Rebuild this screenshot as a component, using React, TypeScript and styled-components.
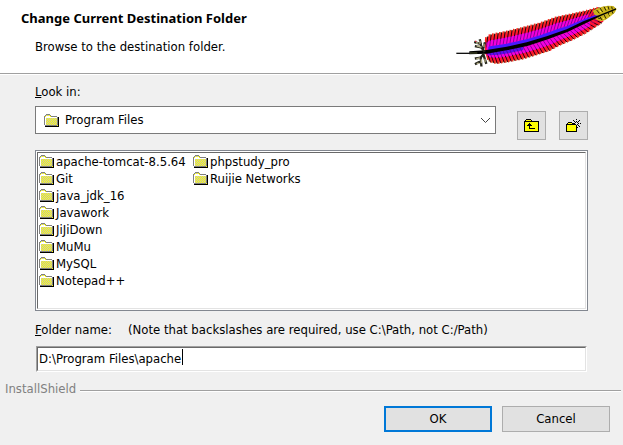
import React, { useState } from "react";
import styled, { createGlobalStyle } from "styled-components";

const GlobalStyle = createGlobalStyle`
  * { box-sizing: border-box; }
  body {
    margin: 0;
    background: #f0f0f0;
    color: #000;
    font: 13px/18px "DejaVu Sans Condensed", "Noto Sans", sans-serif;
  }
  button, input, select { font: inherit; color: inherit; border-radius: 0; }
`;

const Header = styled.header`
  display: flex;
  justify-content: space-between;
  align-items: flex-start;
  padding: 5px 5px 6px 21px;
  background: #fff;
  border-bottom: 1px solid #a0a0a0;
  box-shadow: 0 1px 0 #fff;
`;

const Heading = styled.div`
  display: flex;
  flex-direction: column;
  gap: 11px;
  padding-top: 4px;
`;

const Title = styled.h1`
  margin: 0;
  font: 700 13px/18px "Noto Sans", sans-serif;
`;

const Subtitle = styled.p`
  margin: 0 0 0 14px;
`;

const Form = styled.form`
  margin: 0;
`;

const Fields = styled.main`
  display: flex;
  flex-direction: column;
  padding: 9px 35px 8px;
`;

const LabelRow = styled.div`
  display: flex;
  gap: 16px;
`;

const LookRow = styled.div`
  display: flex;
  align-items: flex-end;
  margin: 5px 0 10px;
`;

const ComboBox = styled.div`
  position: relative;
  flex: 1;
  align-self: flex-start;
  margin: 0 21px 6px 0;
`;

const Combo = styled.select`
  display: block;
  appearance: none;
  width: 100%;
  height: 28px;
  padding: 0 24px 0 29px;
  background: #fff;
  border: 1px solid #7a7a7a;
  outline: none;
`;

const ComboMark = styled.span<{ $side: "left" | "right" }>`
  position: absolute;
  top: 0;
  bottom: 0;
  ${(p) => p.$side}: ${(p) => (p.$side === "left" ? 9 : 5)}px;
  display: flex;
  align-items: center;
  pointer-events: none;
`;

const ToolButton = styled.button`
  display: grid;
  place-items: center;
  width: 29px;
  height: 29px;
  padding: 0;
  background: #e1e1e1;
  border: 1px solid #adadad;

  & + & { margin-left: 13px; }
`;

const ListFrame = styled.div`
  padding: 1px;
  background: #fff;
  border: 1px solid #828790;
`;

const FolderList = styled.ul`
  display: grid;
  grid-auto-flow: column;
  grid-template-rows: repeat(8, 17px);
  grid-auto-columns: 154px;
  margin: 0;
  padding: 0 0 19px 1px;
  list-style: none;
  border: 1px solid;
  border-color: #696969 #e3e3e3 #e3e3e3 #696969;
`;

const FolderButton = styled.button`
  display: flex;
  align-items: center;
  gap: 2px;
  height: 17px;
  padding: 0;
  background: none;
  border: 0;
  line-height: 17px;
  white-space: nowrap;
`;

const NameRow = styled(LabelRow)`
  margin: 10px 0 7px;
`;

const NameBox = styled.div`
  position: relative;
  margin: 0 1px;
  background: #fff;
  border: 1px solid;
  border-color: #a0a0a0 #fff #fff #a0a0a0;
`;

const NameInput = styled.input`
  display: block;
  width: 100%;
  height: 24px;
  padding: 0 1px 2px;
  background: #fff;
  border: 1px solid;
  border-color: #696969 #e3e3e3 #e3e3e3 #696969;
  outline: none;
  caret-color: transparent;
`;

const CaretTrack = styled.span`
  position: absolute;
  top: 2px;
  left: 2px;
  height: 16px;
  padding-right: 1px;
  border-right: 1px solid #000;
  white-space: pre;
  color: transparent;
  pointer-events: none;
`;

const Brand = styled.div`
  display: flex;
  align-items: center;
  gap: 4px;
  padding: 0 2px 0 5px;
  color: #808080;
`;

const Rule = styled.hr`
  flex: 1;
  height: 2px;
  margin: 3px 0 0;
  border: 0;
  border-top: 1px solid #a0a0a0;
  border-bottom: 1px solid #fff;
`;

const Actions = styled.div`
  display: flex;
  justify-content: flex-end;
  gap: 10px;
  padding: 8px 13px 12px;
`;

const ActionButton = styled.button<{ $primary?: boolean }>`
  width: 108px;
  height: 26px;
  padding: 0;
  background: #e1e1e1;
  border: ${(p) => (p.$primary ? "2px solid #0078d7" : "1px solid #adadad")};
`;

const Drawing = styled.svg`
  display: block;
  flex: none;
`;

function FolderIcon() {
  const dots: string[] = [];
  for (let y = 4; y < 11; y++)
    for (let x = 2; x < 13; x++) if ((x + y) % 2 === 0) dots.push(`M${x} ${y}h1v1h-1z`);
  return (
    <Drawing width="15" height="13" viewBox="0 0 15 13" shapeRendering="crispEdges" aria-hidden>
      <path d="M2 1h5v2h7v9H1V2h1z" fill="#ffff00" />
      <path d={dots.join("") + "M2 1h1v1h-1zM4 1h1v1H4z"} fill="#c0c0c0" />
      <path d="M2 0h4v1H2zM1 1h1v1H1zM6 1h1v1H6zM0 2h1v9H0zM7 2h6v1H7zM13 3h1v8h-1zM1 11h12v1H1z" fill="#808080" />
      <path d="M1 3h12v1H1zM1 4h1v7H1zM2 2h4v1H2z" fill="#fff" />
      <path d="M14 3h1v10H1v-1h13z" fill="#000" />
    </Drawing>
  );
}

function UpFolderIcon() {
  return (
    <Drawing width="15" height="13" viewBox="0 0 15 13" shapeRendering="crispEdges" aria-hidden>
      <path d="M2 1h5v1h7v10H1V2h1z" fill="#ffff00" />
      <path d="M2 0h5v1H2zM1 1h1v1H1zM7 1h1v1H7zM0 2h1v11H0zM1 2h14v1H1zM14 3h1v10h-1zM1 12h13v1H1z" fill="#000" />
      <path d="M5 4h1v1H5zM4 5h3v1H4zM3 6h5v1H3zM5 7h1v2H5zM5 9h6v1H5z" fill="#000" />
    </Drawing>
  );
}

function NewFolderIcon() {
  return (
    <Drawing width="15" height="13" viewBox="0 0 15 13" shapeRendering="crispEdges" aria-hidden>
      <path d="M2 4h4v1h4v7H1V5h1z" fill="#ffff00" />
      <path d="M2 3h4v1H2zM1 4h1v1H1zM6 4h1v1H6zM0 5h1v8H0zM1 5h9v1H1zM10 6h1v7h-1zM1 12h9v1H1z" fill="#000" />
      <path
        d="M10 0h1v1h-1zM10 2h1v1h-1zM7 1h1v1H7zM8 2h1v1H8zM13 1h1v1h-1zM12 2h1v1h-1zM11 3h1v1h-1zM9 3h1v1H9zM7 4h2v1H7zM12 4h1v1h-1zM14 4h1v1h-1zM11 5h1v1h-1zM12 6h1v1h-1zM13 7h1v1h-1zM10 6h1v1h-1zM11 8h1v1h-1z"
        fill="#000"
      />
    </Drawing>
  );
}

function Chevron() {
  return (
    <Drawing width="11" height="7" viewBox="0 0 11 7" aria-hidden>
      <path d="M1 1l4.5 4.5L10 1" fill="none" stroke="#444" />
    </Drawing>
  );
}

type Point = [number, number];

const shaft: Point[] = [[135, 155], [200, 146], [260, 133], [320, 114], [380, 92], [430, 68], [480, 46], [530, 27]];
const upper: Point[] = [[135, 118], [150, 106], [200, 96], [250, 84], [300, 71], [350, 53], [400, 43], [440, 34], [470, 26], [490, 20], [515, 18], [530, 27]];
const lower: Point[] = [[135, 160], [148, 184], [170, 189], [200, 185], [250, 175], [290, 163], [330, 150], [360, 134], [400, 117], [440, 97], [470, 77], [490, 65], [510, 52], [530, 30]];

function yAt(line: Point[], x: number) {
  const end = line.findIndex((p) => p[0] >= x);
  if (end < 1) return end === 0 ? line[0][1] : line[line.length - 1][1];
  const [a, b] = [line[end - 1], line[end]];
  return a[1] + ((b[1] - a[1]) * (x - a[0])) / (b[0] - a[0]);
}

function band(edge: Point[], reach: number, from: number, to: number) {
  const out: string[] = [];
  const back: string[] = [];
  for (let x = from; x <= to; x += 5) {
    const s = yAt(shaft, x);
    out.push(`${x} ${s + (yAt(edge, x) - s) * reach}`);
    back.unshift(`${x} ${s}`);
  }
  return `M${out.concat(back).join("L")}Z`;
}

function barbs(edge: Point[], lean: number, shift: number, start: number, stop: number, over = 0) {
  const parts: string[] = [];
  for (let x = 132 + shift; x < 462; x += 10) {
    const tilt = lean + (x - 132) / 22;
    const ax = x + tilt * start;
    const bx = x + tilt * stop;
    const sy = yAt(shaft, ax);
    const ty = yAt(shaft, bx);
    const y1 = sy + (yAt(edge, ax) - sy) * start;
    const y2 = ty + (yAt(edge, bx) - ty) * stop + (edge === upper ? -over : over);
    parts.push(`M${ax} ${y1}L${bx} ${y2}`);
  }
  return parts.join("");
}

function Feather() {
  return (
    <Drawing width="162" height="62" viewBox="48 15 486 186" role="img" aria-label="Feather">
      <path d={band(upper, 1, 135, 480) + band(lower, 1, 135, 490)} fill="#ff1438" />
      <path d={band(upper, 0.68, 140, 445) + band(lower, 0.62, 140, 450)} fill="#f400dc" />
      <path d={band(upper, 0.3, 145, 475)} fill="#4a18ff" />
      <path d={band(lower, 0.38, 140, 250)} fill="#5a10f0" />
      <path d={barbs(upper, 6, 0, 0.8, 1, 4) + barbs(lower, 12, 0, 0.8, 1, 3)} stroke="#ff2020" strokeWidth="5" />
      <path d={barbs(upper, 6, 3, 0.9, 1, 3) + barbs(lower, 12, 3, 0.9, 1, 3)} stroke="#b08a20" strokeWidth="2" />
      <path d={barbs(upper, 6, 5, 0.65, 1, 2) + barbs(lower, 14, 5, 0.55, 1, 2)} stroke="#240010" strokeWidth="3" />
      <path d={barbs(upper, 6, 5, 0.3, 0.65) + barbs(lower, 14, 5, 0.15, 0.55)} stroke="#4a0078" strokeWidth="2" />
      <path d="M458 32L470 26L486 20L504 17L520 18L530 27L524 38L510 50L496 60L482 64L466 58L476 48L464 45Z" fill="#c9b41c" />
      <path
        d="M470 30l8 10M480 24l8 12M492 20l6 12M504 19l3 10M515 20l2 8M480 50l6 10M492 44l6 12M504 38l5 9M516 33l3 8M474 54l8 2"
        stroke="#2a2400"
        strokeWidth="3"
      />
      <path d="M478 32l6 4M498 24l4 2M488 54l5 2M508 43l4 2" stroke="#fff04a" strokeWidth="3" />
      <path
        d="M88 154L135 151L200 140L260 127L320 109L380 88L430 64L480 44L528 25L528 29L482 48L434 71L384 95L324 118L262 138L200 151L140 161L88 163Z"
        fill="#000"
      />
      <path d="M49 158h44v4H49z" fill="#111" />
      <path d="M90 157h22v4H90z" fill="#3c4224" />
      <g fill="none" strokeLinecap="square">
        <path d="M132 153L124 142L108 139M124 142L120 121M122 132L106 127M129 148L134 130M130 163L122 173L108 175M122 173L124 196M122 184L108 191M131 166L138 188" stroke="#26261c" strokeWidth="7" />
        <path d="M123 141l-11 -3M120 130v-6M110 129h3M132 139v-6M118 174l-7 2M124 180v8M112 190h3M135 178v7" stroke="#b4b088" strokeWidth="4" />
      </g>
      <path d="M105 122h4v4h-4z" fill="#e02030" />
    </Drawing>
  );
}

const folders = [
  "apache-tomcat-8.5.64",
  "Git",
  "java_jdk_16",
  "Javawork",
  "JiJiDown",
  "MuMu",
  "MySQL",
  "Notepad++",
  "phpstudy_pro",
  "Ruijie Networks",
];

export default function App() {
  const [name, setName] = useState("D:\\Program Files\\apache");
  return (
    <>
      <GlobalStyle />
      <Header>
        <Heading>
          <Title>Change Current Destination Folder</Title>
          <Subtitle>Browse to the destination folder.</Subtitle>
        </Heading>
        <Feather />
      </Header>
      <Form onSubmit={(e) => e.preventDefault()}>
        <Fields>
          <LabelRow>
            <label htmlFor="look-in"><u>L</u>ook in:</label>
          </LabelRow>
          <LookRow>
            <ComboBox>
              <Combo id="look-in" defaultValue="Program Files">
                <option>Program Files</option>
              </Combo>
              <ComboMark $side="left"><FolderIcon /></ComboMark>
              <ComboMark $side="right"><Chevron /></ComboMark>
            </ComboBox>
            <ToolButton type="button" aria-label="Up one level"><UpFolderIcon /></ToolButton>
            <ToolButton type="button" aria-label="Create new folder"><NewFolderIcon /></ToolButton>
          </LookRow>
          <ListFrame>
            <FolderList aria-label="Folders">
              {folders.map((folder) => (
                <li key={folder}>
                  <FolderButton type="button" onClick={() => setName("D:\\Program Files\\" + folder)}>
                    <FolderIcon />
                    {folder}
                  </FolderButton>
                </li>
              ))}
            </FolderList>
          </ListFrame>
          <NameRow>
            <label htmlFor="folder-name"><u>F</u>older name:</label>
            <span>(Note that backslashes are required, use C:\Path, not C:/Path)</span>
          </NameRow>
          <NameBox>
            <NameInput id="folder-name" value={name} onChange={(e) => setName(e.target.value)} />
            <CaretTrack aria-hidden>{name}</CaretTrack>
          </NameBox>
        </Fields>
        <Brand>
          InstallShield
          <Rule />
        </Brand>
        <Actions>
          <ActionButton type="submit" $primary>OK</ActionButton>
          <ActionButton type="button">Cancel</ActionButton>
        </Actions>
      </Form>
    </>
  );
}
